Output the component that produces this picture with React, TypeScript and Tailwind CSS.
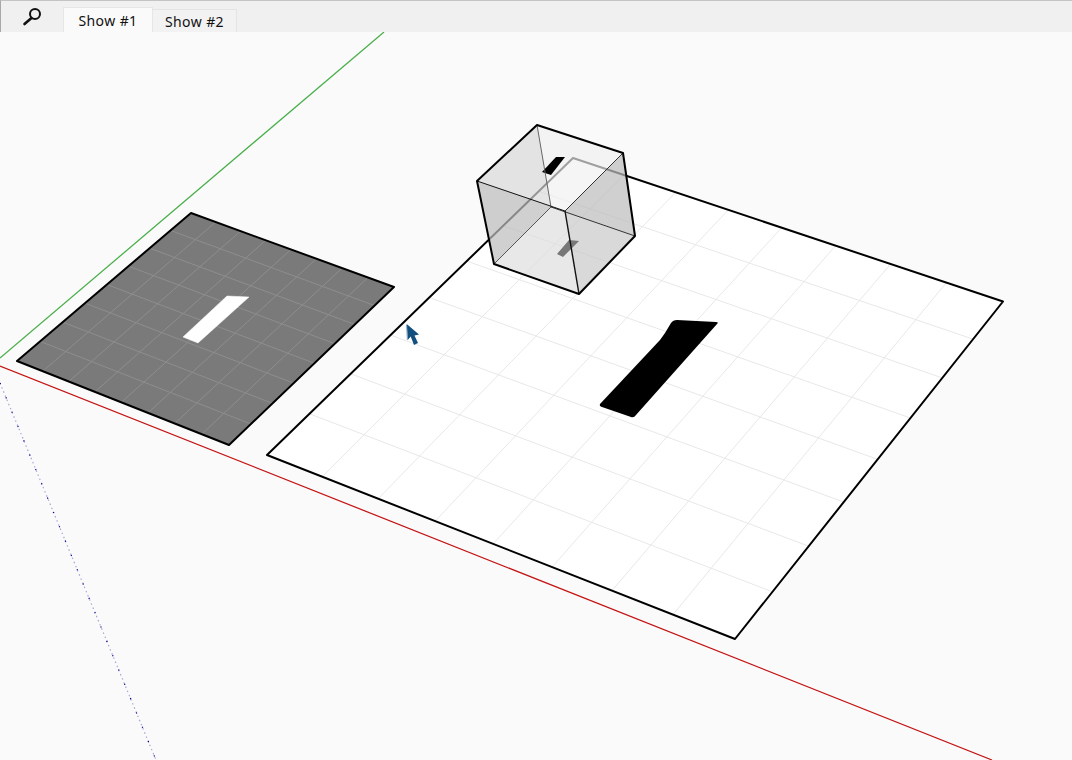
type Pt = [number, number];

// maps the unit square onto a quad, so the grid lines keep their perspective
function homography(a: Pt, b: Pt, c: Pt, d: Pt) {
  const dx1 = b[0] - c[0];
  const dx2 = d[0] - c[0];
  const sx = a[0] - b[0] + c[0] - d[0];
  const dy1 = b[1] - c[1];
  const dy2 = d[1] - c[1];
  const sy = a[1] - b[1] + c[1] - d[1];
  const det = dx1 * dy2 - dx2 * dy1;
  const g = (sx * dy2 - dx2 * sy) / det;
  const h = (dx1 * sy - sx * dy1) / det;
  return (u: number, v: number): Pt => {
    const w = g * u + h * v + 1;
    return [
      ((b[0] - a[0] + g * b[0]) * u + (d[0] - a[0] + h * d[0]) * v + a[0]) / w,
      ((b[1] - a[1] + g * b[1]) * u + (d[1] - a[1] + h * d[1]) * v + a[1]) / w,
    ];
  };
}

const pts = (list: Pt[]) => list.map((p) => p.join(",")).join(" ");

function Plate({ corners, fill, grid }: { corners: [Pt, Pt, Pt, Pt]; fill: string; grid: string }) {
  const map = homography(...corners);
  const ticks = [1, 2, 3, 4, 5, 6, 7].map((n) => n / 8);
  return (
    <g>
      <polygon points={pts(corners)} fill={fill} />
      {ticks.map((t) => (
        <g key={t} stroke={grid} strokeWidth={1}>
          <polyline points={pts([map(t, 0), map(t, 1)])} fill="none" />
          <polyline points={pts([map(0, t), map(1, t)])} fill="none" />
        </g>
      ))}
      <polygon points={pts(corners)} fill="none" stroke="#000" strokeWidth={2} strokeLinejoin="round" />
    </g>
  );
}

function Cube() {
  const hex: Pt[] = [[537, 125], [623, 153], [635, 236], [579, 294], [494, 264], [477, 181]];
  return (
    <g>
      <polygon points={pts(hex)} fill="#fff" fillOpacity={0.65} />
      <polygon points="537,125 477,181 494,264 551,207" fill="#000" fillOpacity={0.1} />
      <polygon points="537,125 623,153 635,236 551,207" fill="#000" fillOpacity={0.04} />
      <polygon points="477,181 565,211 579,294 494,264" fill="#000" fillOpacity={0.09} />
      <polygon points="565,211 623,153 635,236 579,294" fill="#000" fillOpacity={0.15} />
      <polygon points="542,172 551,175 565,157 556,157" fill="#000" />
      <polygon points="557,254 563,257 579,241 569,240" fill="#777" />
      <g fill="none" stroke="#333" strokeWidth={1}>
        <polyline points="537,125 551,207" stroke="#666" />
        <polyline points="551,207 494,264" stroke="#555" />
        <polyline points="551,207 635,236" />
        <polyline points="477,181 565,211" stroke="#111" />
        <polyline points="565,211 623,153" />
      </g>
      <polyline points="565,211 579,294" fill="none" stroke="#111" strokeWidth={1.4} />
      <polygon points={pts(hex)} fill="none" stroke="#000" strokeWidth={2} strokeLinejoin="round" />
    </g>
  );
}

function Tab({ label, active }: { label: string; active?: boolean }) {
  return (
    <div
      className={
        active
          ? "flex h-[25px] w-[90px] items-center justify-center border border-b-0 border-[#e6e6e6] bg-[#fafafa] text-[14px] tracking-[0.4px] text-[#111]"
          : "flex h-[23px] w-[84px] items-center justify-center border border-b-0 border-l-0 border-[#e4e4e4] bg-[#f2f2f2] text-[14px] tracking-[0.4px] text-[#111]"
      }
    >
      {label}
    </div>
  );
}

export default function App() {
  return (
    <div className="flex h-screen w-full flex-col overflow-hidden bg-[#fafafa] font-['Noto_Sans',sans-serif]">
      {/* Barra de pestañas */}
      <div className="flex h-8 shrink-0 items-end border-t border-l border-t-[#c4c4c4] border-l-[#a8a8a8] bg-[#f0f0f0]">
        <div className="flex h-full w-[62px] items-start">
          <svg width="24" height="24" viewBox="0 0 24 24" className="mt-[4px] ml-[21px]" fill="none" stroke="#111">
            <circle cx="13" cy="9" r="5" strokeWidth="2" />
            <path d="M9.5 13 L2.5 19" strokeWidth="2.6" strokeLinecap="round" />
          </svg>
        </div>
        <Tab label="Show #1" active />
        <Tab label="Show #2" />
      </div>

      {/* Vista 3D */}
      <svg viewBox="0 32 1072 728" className="block h-[728px] w-[1072px] shrink-0">
        <line x1="0" y1="358" x2="384" y2="32" stroke="#48ad48" strokeWidth="1.25" />
        <line x1="0" y1="366" x2="992" y2="760" stroke="#c41414" strokeWidth="1.25" />
        <line x1="0" y1="383" x2="156" y2="760" stroke="#a8a8d8" strokeWidth="1.2" strokeDasharray="1.5 3" />
        <line x1="0" y1="383" x2="156" y2="760" stroke="#000090" strokeWidth="1.2" strokeDasharray="1.2 14.3" />

        <Plate corners={[[17, 361], [229, 445], [394, 287], [191, 213]]} fill="#7a7a7a" grid="#8e8e8e" />
        <polygon points="183,337 198,343 249,297 227,296" fill="#fff" stroke="#fff" strokeWidth="0.5" strokeLinejoin="round" />

        <Plate corners={[[267, 455], [735, 639], [1003, 301.5], [573, 158]]} fill="#fff" grid="#e8e8e8" />
        <path
          d="M600 404 L660 340 L665 333 L671 323 Q673 320 677 320 L716 322 Q719 322 717 324 L636 415 Q634 418 631 417 L602 407 Q599 406 600 404 Z"
          fill="#000"
        />

        <Cube />

        {/* Cursor */}
        <polygon
          points="406.7,324 419,334.5 414.5,335.5 418,343 414,345 410.7,336.5 407.7,340"
          fill="#14507f"
        />
        <line x1="406.6" y1="325" x2="407.4" y2="340" stroke="#7fa3bf" strokeWidth="1" />
      </svg>
    </div>
  );
}
